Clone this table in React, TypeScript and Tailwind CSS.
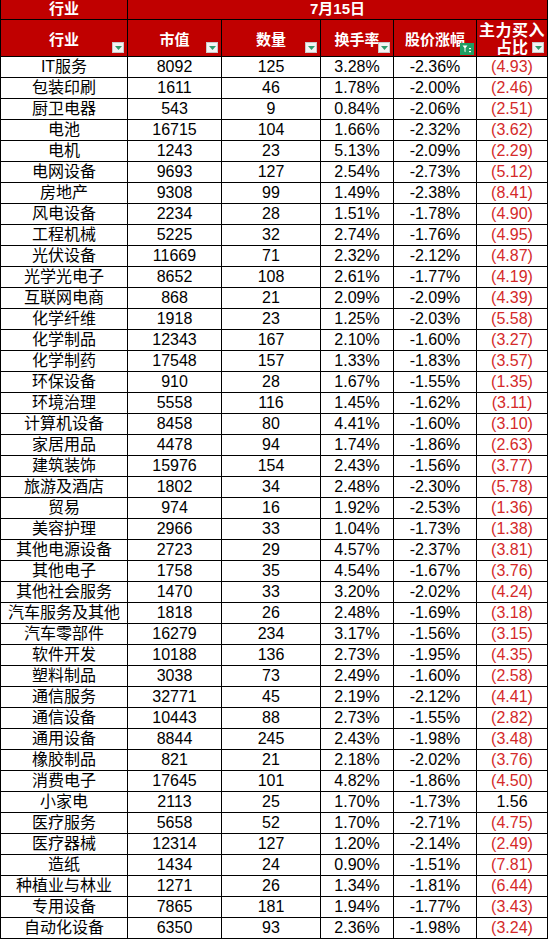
type Row = [string, number, number, string, string, string];

const rows: Row[] = [
    ["IT服务", 8092, 125, "3.28%", "-2.36%", "(4.93)"],
    ["包装印刷", 1611, 46, "1.78%", "-2.00%", "(2.46)"],
    ["厨卫电器", 543, 9, "0.84%", "-2.06%", "(2.51)"],
    ["电池", 16715, 104, "1.66%", "-2.32%", "(3.62)"],
    ["电机", 1243, 23, "5.13%", "-2.09%", "(2.29)"],
    ["电网设备", 9693, 127, "2.54%", "-2.73%", "(5.12)"],
    ["房地产", 9308, 99, "1.49%", "-2.38%", "(8.41)"],
    ["风电设备", 2234, 28, "1.51%", "-1.78%", "(4.90)"],
    ["工程机械", 5225, 32, "2.74%", "-1.76%", "(4.95)"],
    ["光伏设备", 11669, 71, "2.32%", "-2.12%", "(4.87)"],
    ["光学光电子", 8652, 108, "2.61%", "-1.77%", "(4.19)"],
    ["互联网电商", 868, 21, "2.09%", "-2.09%", "(4.39)"],
    ["化学纤维", 1918, 23, "1.25%", "-2.03%", "(5.58)"],
    ["化学制品", 12343, 167, "2.10%", "-1.60%", "(3.27)"],
    ["化学制药", 17548, 157, "1.33%", "-1.83%", "(3.57)"],
    ["环保设备", 910, 28, "1.67%", "-1.55%", "(1.35)"],
    ["环境治理", 5558, 116, "1.45%", "-1.62%", "(3.11)"],
    ["计算机设备", 8458, 80, "4.41%", "-1.60%", "(3.10)"],
    ["家居用品", 4478, 94, "1.74%", "-1.86%", "(2.63)"],
    ["建筑装饰", 15976, 154, "2.43%", "-1.56%", "(3.77)"],
    ["旅游及酒店", 1802, 34, "2.48%", "-2.30%", "(5.78)"],
    ["贸易", 974, 16, "1.92%", "-2.53%", "(1.36)"],
    ["美容护理", 2966, 33, "1.04%", "-1.73%", "(1.38)"],
    ["其他电源设备", 2723, 29, "4.57%", "-2.37%", "(3.81)"],
    ["其他电子", 1758, 35, "4.54%", "-1.67%", "(3.76)"],
    ["其他社会服务", 1470, 33, "3.20%", "-2.02%", "(4.24)"],
    ["汽车服务及其他", 1818, 26, "2.48%", "-1.69%", "(3.18)"],
    ["汽车零部件", 16279, 234, "3.17%", "-1.56%", "(3.15)"],
    ["软件开发", 10188, 136, "2.73%", "-1.95%", "(4.35)"],
    ["塑料制品", 3038, 73, "2.49%", "-1.60%", "(2.58)"],
    ["通信服务", 32771, 45, "2.19%", "-2.12%", "(4.41)"],
    ["通信设备", 10443, 88, "2.73%", "-1.55%", "(2.82)"],
    ["通用设备", 8844, 245, "2.43%", "-1.98%", "(3.48)"],
    ["橡胶制品", 821, 21, "2.18%", "-2.02%", "(3.76)"],
    ["消费电子", 17645, 101, "4.82%", "-1.86%", "(4.50)"],
    ["小家电", 2113, 25, "1.70%", "-1.73%", "1.56"],
    ["医疗服务", 5658, 52, "1.70%", "-2.71%", "(4.75)"],
    ["医疗器械", 12314, 127, "1.20%", "-2.14%", "(2.49)"],
    ["造纸", 1434, 24, "0.90%", "-1.51%", "(7.81)"],
    ["种植业与林业", 1271, 26, "1.34%", "-1.81%", "(6.44)"],
    ["专用设备", 7865, 181, "1.94%", "-1.77%", "(3.43)"],
    ["自动化设备", 6350, 93, "2.36%", "-1.98%", "(3.24)"],
];

const cols = "grid grid-cols-[128px_94px_99px_73px_83px_71px]";
const font = { fontFamily: '"Liberation Sans", Arial, "Noto Sans CJK SC", sans-serif' };

function FilterButton({ active = false }: { active?: boolean }) {
    if (active) {
        return (
            <span className="absolute bottom-[1px] right-[2px] flex h-[12px] w-[14px] items-center justify-center bg-[#1e9e62]">
                <svg width="10" height="9" viewBox="0 0 10 9">
                    <path d="M0.5 0.5h5l-2 2.6v4.2l-1-0.7v-3.5z" fill="#fff" />
                    <rect x="7" y="3" width="2" height="1.2" fill="#fff" />
                    <rect x="7" y="6" width="2" height="1.2" fill="#fff" />
                </svg>
            </span>
        );
    }
    return (
        <span className="absolute bottom-[3px] right-[3px] flex h-[11px] w-[12px] items-center justify-center border border-[#c8c8c8] bg-[#f4f4f4]">
            <svg width="7" height="4" viewBox="0 0 7 4">
                <path d="M0 0h7L3.5 4z" fill="#2f9a6c" />
            </svg>
        </span>
    );
}

function HeadCell({ label, active, first }: { label: React.ReactNode; active?: boolean; first?: boolean }) {
    return (
        <div
            className={`relative flex h-[37px] items-center justify-center border-r border-b border-black bg-[#c00000] pt-[2px] text-[15px] leading-[17px] font-bold text-white ${
                first ? "border-l" : ""
            }`}
        >
            <span className="text-center">{label}</span>
            <FilterButton active={active} />
        </div>
    );
}

export default function App() {
    return (
        <div className="h-[940px] w-[550px] bg-white" style={font}>
            <div className="w-[548px]">
                <div className={cols}>
                    <div className="flex h-[20px] items-center justify-center border-r border-b border-l border-black bg-[#c00000] text-[15px] font-bold text-white">
                        行业
                    </div>
                    <div className="col-span-5 flex h-[20px] items-center justify-center border-r border-b border-black bg-[#c00000] text-[15px] font-bold text-white">
                        7月15日
                    </div>
                </div>
                <div className={cols}>
                    <HeadCell label="行业" first />
                    <HeadCell label="市值" />
                    <HeadCell label="数量" />
                    <HeadCell label="换手率" />
                    <HeadCell label="股价涨幅" active />
                    <HeadCell
                        label={
                            <>
                                <span className="block text-[16px] tracking-[0.5px]">主力买入</span>
                                <span className="block text-[16px]">占比</span>
                            </>
                        }
                    />
                </div>
                {rows.map((r) => (
                    <div key={r[0]} className={`${cols} h-[21px] text-[16px] leading-[20px] text-black`}>
                        <div className="border-r border-b border-l border-black text-center">{r[0]}</div>
                        <div className="border-r border-b border-black text-center">{r[1]}</div>
                        <div className="border-r border-b border-black text-center">{r[2]}</div>
                        <div className="border-r border-b border-black text-center">{r[3]}</div>
                        <div className="border-r border-b border-black text-center">{r[4]}</div>
                        <div
                            className={`border-r border-b border-black text-center ${
                                r[5].startsWith("(") ? "text-[#d42a2a]" : "text-black"
                            }`}
                        >
                            {r[5]}
                        </div>
                    </div>
                ))}
            </div>
        </div>
    );
}
